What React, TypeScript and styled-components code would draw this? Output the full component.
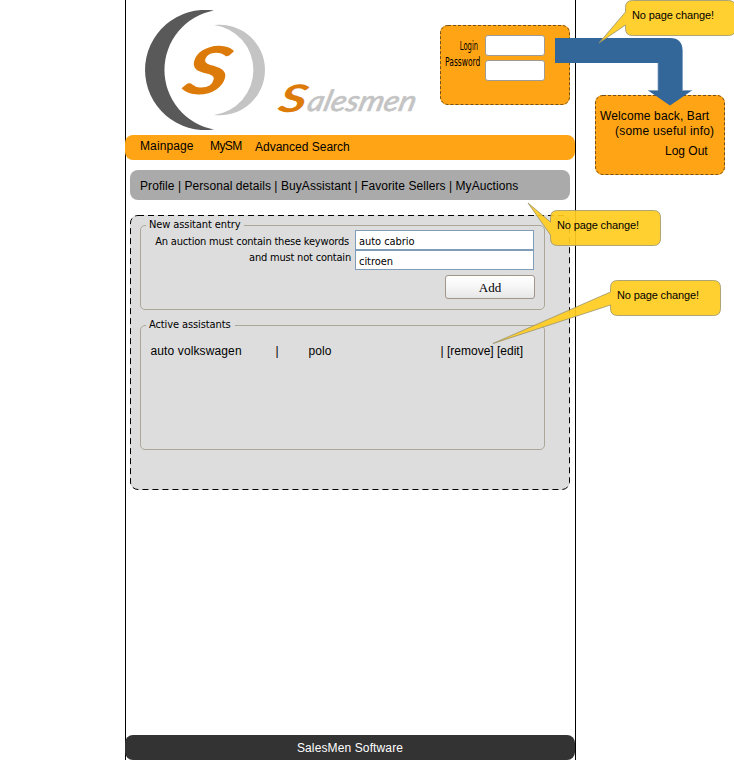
import React from "react";
import styled, { createGlobalStyle } from "styled-components";

const Global = createGlobalStyle`
  * { box-sizing: border-box; }
  html, body { margin: 0; padding: 0; background: #fff; overflow: hidden; }
`;

const ARIAL = `"Liberation Sans", Arial, sans-serif`;
const TAHOMA = `"DejaVu Sans Condensed", "DejaVu Sans", sans-serif`;

const Canvas = styled.div`
  position: relative;
  display: grid;
  grid-template-columns: 451px 1fr;
  width: 734px;
  height: 760px;
  padding-left: 125px;
  overflow: hidden;
  background: #fff;
  color: #000;
  font: 12px/14px ${ARIAL};
`;

const Page = styled.div`
  display: flex;
  flex-direction: column;
  height: 760px;
  background:
    linear-gradient(#000, #000) left / 1px 100% no-repeat,
    linear-gradient(#000, #000) right / 1px 100% no-repeat;
`;

const Header = styled.header`
  display: flex;
  height: 135px;
  padding: 10px 0 0 20px;
`;

const Emblem = styled.svg`
  flex: none;
  width: 120px;
  height: 120px;
`;

const Wordmark = styled.svg`
  flex: none;
  width: 150px;
  height: 60px;
  margin: 60px 15px 0 10px;
`;

const Card = styled.div`
  position: relative;
  flex: none;
  width: 130px;
  height: 80px;
  border-radius: 8px;
  background: #ffa414;
`;

const Frame = styled.svg`
  position: absolute;
  inset: 0;
  width: 100%;
  height: 100%;
  pointer-events: none;
`;

const LoginCard = styled(Card)`
  display: grid;
  grid-template-columns: 41px 60px;
  grid-template-rows: 21px 21px;
  row-gap: 4px;
  column-gap: 4px;
  padding-top: 10px;
  margin-top: 15px;
`;

const LoginLabel = styled.label<{ $shift: number; $end: number; $squeeze: number }>`
  justify-self: end;
  white-space: nowrap;
  font: 12px/14px ${TAHOMA};
  margin: ${(p) => p.$shift}px ${(p) => p.$end}px 0 0;
  transform: scaleX(${(p) => p.$squeeze});
  transform-origin: right;
`;

const LoginInput = styled.input`
  width: 60px;
  height: 21px;
  padding: 0 4px;
  border: 1px solid #a09a94;
  border-radius: 3px;
  background: #fff;
  outline: none;
`;

const MainNav = styled.nav`
  display: flex;
  width: 450px;
  height: 25px;
  padding: 4px 0 0 15px;
  border-radius: 8px;
  background: #ffa414;
`;

const NavItem = styled.a<{ $width?: number; $drop?: number; $track?: number }>`
  width: ${(p) => (p.$width ? `${p.$width}px` : "auto")};
  padding-top: ${(p) => p.$drop ?? 0}px;
  letter-spacing: ${(p) => p.$track ?? 0}px;
  white-space: nowrap;
`;

const SubNav = styled.nav`
  width: 440px;
  height: 30px;
  margin: 10px 0 0 5px;
  padding: 9px 0 0 10px;
  border-radius: 8px;
  background: #aaa;
  letter-spacing: 0.068px;
  white-space: nowrap;
`;

const Panel = styled.main`
  position: relative;
  width: 440px;
  height: 275px;
  margin: 15px 0 0 5px;
  padding: 10px 0 0 10px;
  border-radius: 8px;
  background: #ddd;
`;

const Group = styled.section<{ $height: number }>`
  width: 405px;
  height: ${(p) => p.$height}px;
  margin-bottom: 15px;
  border: 1px solid #aca899;
  border-radius: 5px;
`;

const Legend = styled.h2`
  width: fit-content;
  margin: -6px 0 0 5px;
  padding: 0 4px 0 3px;
  background: #ddd;
  font: 11px/10px ${TAHOMA};
  letter-spacing: -0.1px;
`;

const Fields = styled.div`
  display: grid;
  grid-template-columns: 210px 179px;
  grid-template-rows: 20px 20px;
  column-gap: 4px;
`;

const FieldLabel = styled.label<{ $lift: number; $end: number }>`
  justify-self: end;
  margin: ${(p) => p.$lift}px ${(p) => p.$end}px 0 0;
  font: 11px/14px ${TAHOMA};
  letter-spacing: -0.2px;
  white-space: nowrap;
`;

const FieldInput = styled.input`
  width: 179px;
  height: 20px;
  padding: 2px 3px 0;
  border: 1px solid #7f9db9;
  border-radius: 0;
  background: #fff;
  color: #000;
  font: 11px/14px ${TAHOMA};
  letter-spacing: -0.05px;
  outline: none;
`;

const AddButton = styled.button`
  display: block;
  width: 90px;
  height: 24px;
  margin: 5px 0 0 304px;
  padding: 2px 0 0;
  border: 1px solid #a2958a;
  border-radius: 3px;
  background: linear-gradient(#fff, #f6f6f6 50%, #e6e6e6);
  color: #000;
  font: 13px/18px "Liberation Serif", "Times New Roman", serif;
`;

const AssistantRow = styled.div`
  display: grid;
  grid-template-columns: 125px 33px 132px auto;
  padding: 14px 0 0 9.500px;
  white-space: nowrap;
`;

const Keywords = styled.span`
  letter-spacing: 0.12px;
`;

const Footer = styled.footer`
  width: 450px;
  height: 25px;
  margin-top: auto;
  padding-top: 6px;
  border-radius: 8px;
  background: #333;
  color: #fff;
  letter-spacing: 0.12px;
  text-align: center;
`;

const Aside = styled.aside`
  padding: 95px 0 0 19px;
`;

const WelcomeCard = styled(Card)`
  display: flex;
  flex-direction: column;
  padding-top: 14px;
`;

const WelcomeLine = styled.span<{ $left: number; $gap?: number; $track?: number }>`
  margin: ${(p) => p.$gap ?? 0}px 0 0 ${(p) => p.$left}px;
  line-height: 15px;
  letter-spacing: ${(p) => p.$track ?? 0}px;
  white-space: nowrap;
`;

const FlowArrow = styled.svg`
  position: absolute;
  left: 555px;
  top: 38px;
  width: 140px;
  height: 70px;
`;

const Note = styled.div<{ $x: number; $y: number }>`
  position: absolute;
  left: ${(p) => p.$x}px;
  top: ${(p) => p.$y}px;
  width: 110px;
  height: 35px;
  padding: 9px 0 0 7px;
  font-size: 11px;
  line-height: 13px;
  letter-spacing: -0.13px;
  white-space: nowrap;
`;

const NoteShape = styled.svg`
  position: absolute;
  left: 0;
  top: 0;
  width: 111px;
  height: 36px;
  overflow: visible;
`;

const NoteText = styled.span`
  position: relative;
`;

type DashProps = { w: number; h: number; color: string; dash: string };

function DashedFrame({ w, h, color, dash }: DashProps) {
  return (
    <Frame viewBox={`0 0 ${w} ${h}`}>
      <rect x=".5" y=".5" width={w - 1} height={h - 1} rx="7.5" fill="none" stroke={color} strokeDasharray={dash} />
    </Frame>
  );
}

type CalloutProps = { x: number; y: number; tip: [number, number]; base: [number, number] };

function Callout({ x, y, tip, base }: CalloutProps) {
  const d = `M7.5 .5H103.5Q110.5 .5 110.5 7.5V28.5Q110.5 35.5 103.5 35.5H7.5Q.5 35.5 .5 28.5V${base[1]}L${tip[0]} ${tip[1]}L.5 ${base[0]}V7.5Q.5 .5 7.5 .5Z`;
  return (
    <Note $x={x} $y={y}>
      <NoteShape>
        <path d={d} fill="#ffcc1e" fillOpacity=".92" stroke="#9a946c" strokeOpacity=".8" />
      </NoteShape>
      <NoteText>No page change!</NoteText>
    </Note>
  );
}

export default function App() {
  return (
    <Canvas>
      <Global />
      <Page>
        <Header>
          <Emblem viewBox="0 0 120 120">
            <path d="M69 .5A60.150 60.150 0 1 0 69 119.500A60.500 60.500 0 0 1 69 .5Z" fill="#595959" />
            <path d="M69 15A45.350 45.350 0 1 1 69 105A45.400 45.400 0 0 0 69 15Z" fill="#c4c4c4" />
            <text transform="translate(35.500 84) skewX(-12) scale(1.320 1)" fill="#dc7b0a" fontFamily="Lato" fontStyle="italic" fontWeight="700" fontSize="66">S</text>
          </Emblem>
          <Wordmark viewBox="0 0 150 60">
            <text transform="translate(2 42) skewX(-12) scale(1.400 1)" fill="#dc7b0a" fontFamily="Lato" fontStyle="italic" fontWeight="700" fontSize="38">S</text>
            <text transform="translate(31 40.500) skewX(-14)" textLength="108" lengthAdjust="spacingAndGlyphs" fill="#c4c4c4" stroke="#c4c4c4" strokeWidth=".7" fontFamily="Lato" fontStyle="italic" fontSize="29">alesmen</text>
          </Wordmark>
          <LoginCard>
            <DashedFrame w={130} h={80} color="#76501c" dash="3 2" />
            <LoginLabel htmlFor="login" $shift={4} $end={3} $squeeze={0.63}>Login</LoginLabel>
            <LoginInput id="login" />
            <LoginLabel htmlFor="password" $shift={-5} $end={1} $squeeze={0.7}>Password</LoginLabel>
            <LoginInput id="password" />
          </LoginCard>
        </Header>
        <MainNav>
          <NavItem $width={70} $track={0.12}>Mainpage</NavItem>
          <NavItem $width={45} $track={-0.6}>MySM</NavItem>
          <NavItem $drop={1}>Advanced Search</NavItem>
        </MainNav>
        <SubNav>Profile | Personal details | BuyAssistant | Favorite Sellers | MyAuctions</SubNav>
        <Panel>
          <DashedFrame w={440} h={275} color="#000" dash="6 4" />
          <Group $height={85}>
            <Legend>New assitant entry</Legend>
            <Fields>
              <FieldLabel htmlFor="with" $lift={5} $end={2}>An auction must contain these keywords</FieldLabel>
              <FieldInput id="with" defaultValue="auto cabrio" />
              <FieldLabel htmlFor="without" $lift={1} $end={0}>and must not contain</FieldLabel>
              <FieldInput id="without" defaultValue="citroen" />
            </Fields>
            <AddButton>Add</AddButton>
          </Group>
          <Group $height={125}>
            <Legend>Active assistants</Legend>
            <AssistantRow>
              <Keywords>auto volkswagen</Keywords>
              <span>|</span>
              <Keywords>polo</Keywords>
              <span>| [remove] [edit]</span>
            </AssistantRow>
          </Group>
        </Panel>
        <Footer>SalesMen Software</Footer>
      </Page>
      <Aside>
        <WelcomeCard>
          <DashedFrame w={130} h={80} color="#76501c" dash="3 2" />
          <WelcomeLine $left={5} $track={0.12}>Welcome back, Bart</WelcomeLine>
          <WelcomeLine $left={20} $track={0.22}>(some useful info)</WelcomeLine>
          <WelcomeLine $left={70} $gap={5}>Log Out</WelcomeLine>
        </WelcomeCard>
      </Aside>
      <FlowArrow viewBox="0 0 140 70">
        <path d="M0 0H115Q127.500 0 127.500 12.500V52.500H137L115 67.500L93 52.500H103V25H0Z" fill="#336699" />
        <path d="M127.500 12V52.500H137M93 52.500H103V25" fill="none" stroke="#7b9cbd" strokeWidth=".7" />
      </FlowArrow>
      <Callout x={625} y={0} tip={[-26, 43]} base={[12, 25]} />
      <Callout x={550} y={210} tip={[-22, -7]} base={[12, 25]} />
      <Callout x={610} y={280} tip={[-117, 63.5]} base={[12, 25]} />
    </Canvas>
  );
}
